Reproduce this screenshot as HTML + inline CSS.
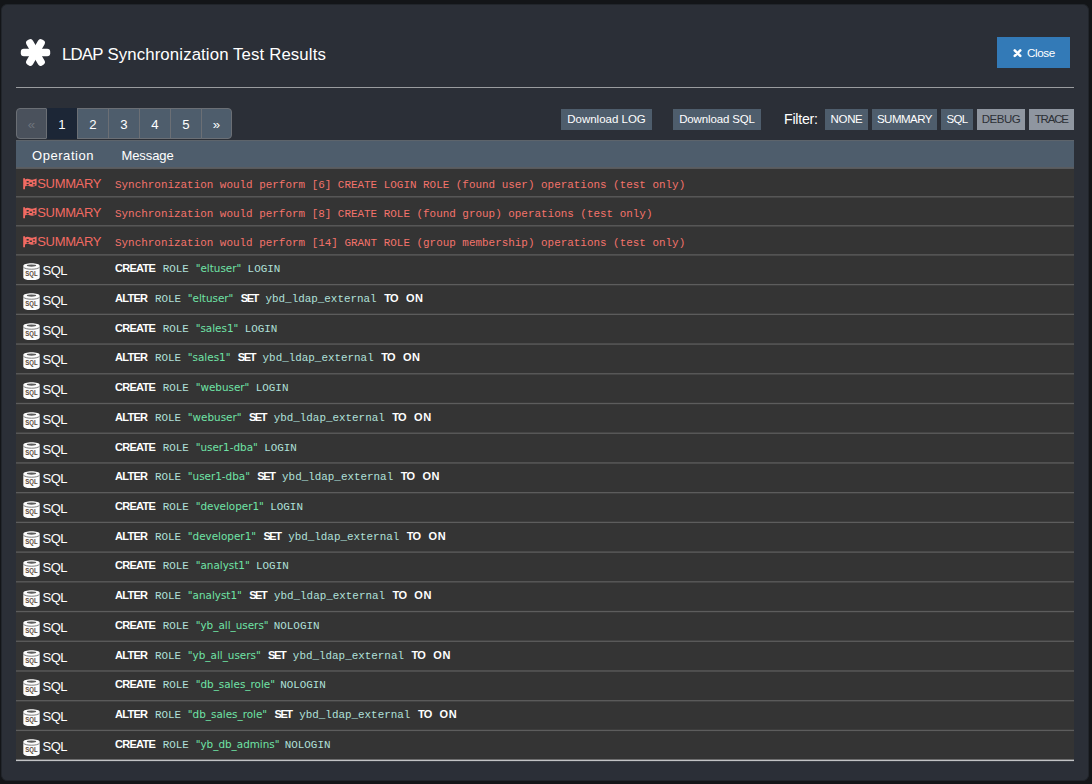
<!DOCTYPE html>
<html lang="en">
<head>
<meta charset="utf-8">
<title>LDAP Synchronization Test Results</title>
<style>
*{box-sizing:border-box}
html,body{margin:0;padding:0}
body{width:1092px;height:784px;overflow:hidden;background:#131518;font-family:"Liberation Sans",sans-serif;color:#fff;position:relative}
.modal{position:absolute;left:1px;top:4px;width:1088px;height:777px;background:#2b2f37;border:1px solid #21252b;border-radius:6px}
.icon{position:absolute;left:20px;top:38px;width:31px;height:29px}
h1{position:absolute;left:62px;top:44px;margin:0;font-weight:normal;font-size:16.8px;line-height:22px;color:#fff;white-space:nowrap}
.close{position:absolute;left:997px;top:37px;width:73px;height:31px;background:#337ab7;color:#fff;font-size:11.7px;letter-spacing:-0.4px;line-height:31px}
.close svg{position:absolute;left:15.600px;top:12.400px;width:9px;height:8.400px}
.close span{position:absolute;left:30px;top:0}
hr{position:absolute;left:16px;top:87px;width:1058px;height:1px;margin:0;border:0;background:#9a9c9f}
.pg{position:absolute;left:16px;top:108px;height:31px;display:flex}
.pg a{display:block;width:32px;height:31px;margin-left:-1px;border:1px solid #6b6f75;background:#4e5d6c;color:#fff;font-size:13.2px;line-height:31px;text-align:center}
.pg a:first-child{margin-left:0;border-radius:4px 0 0 4px;background:#4a515c;color:#6e747c;width:31px}
.pg a:last-child{border-radius:0 4px 4px 0;width:31px}
.pg a.act{background:#1c2636;border-color:#1c2636 #6b6f75}
.btn{position:absolute;top:109px;height:21px;background:#4e5d6c;color:#fff;font-size:11.5px;line-height:21px;text-align:center;white-space:nowrap}
.btn.off{background:#8f96a0;color:#2c3036}
.flt{position:absolute;left:784px;top:108.500px;font-size:14.2px;letter-spacing:-0.25px;line-height:21px;color:#fff}
.tbl{position:absolute;left:16px;top:140px;width:1058px;height:622px}
.grid{position:absolute;left:0;top:0}
.th{position:absolute;top:8px;font-size:13px;line-height:16px;color:#fff}
.r{position:absolute;left:0;width:1058px;height:29px;white-space:nowrap}
.r.s{color:#f26a62}
.r.s .m{color:#f3736b}
.r .lab{position:absolute;font-size:13px;line-height:16px;top:8px}
.r.s .lab{left:21.300px;letter-spacing:-0.35px}
.r.q .lab{left:26.600px;color:#fff;letter-spacing:-0.6px}
.fl{position:absolute;left:6.500px;top:9.700px;width:14px;height:12px;fill:currentColor}
.db{position:absolute;left:7px;top:7.600px;width:17px;height:17.600px}
.r .m{position:absolute;left:99px;top:8px;line-height:16px;font-family:"Liberation Mono",monospace;font-size:10.900px}
.r.s .m{font-size:10.930px;top:9px}
.r.q .m{top:4.600px;color:#b0e0da;word-spacing:1px}
.m b{font-family:"Liberation Sans",sans-serif;font-weight:bold;color:#fff;font-size:11px;letter-spacing:-0.7px}
.m b.k{letter-spacing:-1.4px}
.m b.o{letter-spacing:0.6px;margin-left:0.5px}
.m i{font-style:normal}
.m i.l{margin-left:-1px}
.m i.n{margin-left:-2.2px}
.m q{font-family:"DejaVu Sans","Liberation Sans",sans-serif;quotes:none;color:#6fe3a6;font-size:10.4px;margin-left:-0.8px;margin-right:-0.2px}
.m q.u{letter-spacing:0}
.m q.v{letter-spacing:0}
</style>
</head>
<body>
<div class="modal"></div>
<svg class="icon" viewBox="-15.500 -14.500 31 29"><g fill="#fff"><rect x="-14.700" y="-3.750" width="29.400" height="7.500" rx="3"/><rect x="-14.500" y="-3.750" width="29" height="7.500" rx="3" transform="rotate(60)"/><rect x="-14.500" y="-3.750" width="29" height="7.500" rx="3" transform="rotate(120)"/></g></svg>
<h1><span style="letter-spacing:-0.8px">LDAP</span><span style="letter-spacing:0.12px"> Synchronization Test Results</span></h1>
<div class="close"><svg viewBox="0 0 10 10"><path d="M1.700 1.700 8.300 8.300M8.300 1.700 1.700 8.300" stroke="#fff" stroke-width="3" stroke-linecap="round" fill="none"/></svg><span>Close</span></div>
<hr>
<div class="pg"><a>«</a><a class="act">1</a><a>2</a><a>3</a><a>4</a><a>5</a><a>»</a></div>
<div class="btn" style="left:561px;width:91px">Download LOG</div>
<div class="btn" style="left:673px;width:88px;letter-spacing:-0.15px">Download SQL</div>
<div class="flt">Filter:</div>
<div class="btn" style="left:825px;width:43px;letter-spacing:-0.35px">NONE</div>
<div class="btn" style="left:872px;width:65px;letter-spacing:-0.5px">SUMMARY</div>
<div class="btn" style="left:941px;width:32px;letter-spacing:-0.6px">SQL</div>
<div class="btn off" style="left:977px;width:48px;letter-spacing:-0.5px">DEBUG</div>
<div class="btn off" style="left:1029px;width:45px;letter-spacing:-1.2px;text-indent:-0.500px">TRACE</div>
<div class="tbl">
<svg class="grid" width="1058" height="622" viewBox="0 0 1058 622">
<rect x="0" y="0" width="1058" height="27.6" fill="#4e5d6c"/>
<rect x="0" y="27.6" width="1058" height="592.40" fill="#343434"/>
<rect x="0" y="27.35" width="1058" height="1.3" fill="#6c6e70"/>
<rect x="0" y="0" width="1058" height="1.1" fill="#5d646b"/>
<rect x="0" y="56.15" width="1058" height="1.3" fill="#5d5d5d"/>
<rect x="0" y="85.15" width="1058" height="1.3" fill="#5d5d5d"/>
<rect x="0" y="114.25" width="1058" height="1.3" fill="#5d5d5d"/>
<rect x="0" y="143.97" width="1058" height="1.3" fill="#5d5d5d"/>
<rect x="0" y="173.69" width="1058" height="1.3" fill="#5d5d5d"/>
<rect x="0" y="203.41" width="1058" height="1.3" fill="#5d5d5d"/>
<rect x="0" y="233.13" width="1058" height="1.3" fill="#5d5d5d"/>
<rect x="0" y="262.85" width="1058" height="1.3" fill="#5d5d5d"/>
<rect x="0" y="292.57" width="1058" height="1.3" fill="#5d5d5d"/>
<rect x="0" y="322.29" width="1058" height="1.3" fill="#5d5d5d"/>
<rect x="0" y="352.01" width="1058" height="1.3" fill="#5d5d5d"/>
<rect x="0" y="381.73" width="1058" height="1.3" fill="#5d5d5d"/>
<rect x="0" y="411.45" width="1058" height="1.3" fill="#5d5d5d"/>
<rect x="0" y="441.17" width="1058" height="1.3" fill="#5d5d5d"/>
<rect x="0" y="470.89" width="1058" height="1.3" fill="#5d5d5d"/>
<rect x="0" y="500.61" width="1058" height="1.3" fill="#5d5d5d"/>
<rect x="0" y="530.33" width="1058" height="1.3" fill="#5d5d5d"/>
<rect x="0" y="560.05" width="1058" height="1.3" fill="#5d5d5d"/>
<rect x="0" y="589.77" width="1058" height="1.3" fill="#5d5d5d"/>
<rect x="0" y="619.60" width="1058" height="1.5" fill="#c2c3c5"/>
</svg>
<div class="th" style="left:16px;letter-spacing:0.55px">Operation</div>
<div class="th" style="left:105.5px;letter-spacing:-0.1px">Message</div>
<div class="r s" style="top:28px"><svg class="fl" viewBox="0 0 14 12"><path fill-rule="evenodd" d="M0.200 0.200h1.800v11h-1.800z M2 1.500c1.800-1.100 3.600-0.600 5.600 0 2 0.600 3.900 0.200 6-0.900v6.900c-2.100 1.100-4 1.500-6 0.900-2-0.600-3.800-1.100-5.600 0z M3.600 2.900h2.100v1.500h-2.100z M9.900 3.200h2.200v1.400h-2.200z M6.700 4.600h2.200v1.400h-2.200z M3.600 5.900h2.100v1.300h-2.100z M9.900 6.200h2.200v1.300h-2.200z"/></svg><span class="lab">SUMMARY</span><span class="m">Synchronization would perform [6] CREATE LOGIN ROLE (found user) operations (test only)</span></div>
<div class="r s" style="top:57px"><svg class="fl" viewBox="0 0 14 12"><path fill-rule="evenodd" d="M0.200 0.200h1.800v11h-1.800z M2 1.500c1.800-1.100 3.600-0.600 5.600 0 2 0.600 3.900 0.200 6-0.900v6.900c-2.100 1.100-4 1.500-6 0.900-2-0.600-3.800-1.100-5.600 0z M3.600 2.900h2.100v1.500h-2.100z M9.900 3.200h2.200v1.400h-2.200z M6.700 4.600h2.200v1.400h-2.200z M3.600 5.900h2.100v1.300h-2.100z M9.900 6.200h2.200v1.300h-2.200z"/></svg><span class="lab">SUMMARY</span><span class="m">Synchronization would perform [8] CREATE ROLE (found group) operations (test only)</span></div>
<div class="r s" style="top:86px"><svg class="fl" viewBox="0 0 14 12"><path fill-rule="evenodd" d="M0.200 0.200h1.800v11h-1.800z M2 1.500c1.800-1.100 3.600-0.600 5.600 0 2 0.600 3.900 0.200 6-0.900v6.900c-2.100 1.100-4 1.500-6 0.900-2-0.600-3.800-1.100-5.600 0z M3.600 2.900h2.100v1.500h-2.100z M9.900 3.200h2.200v1.400h-2.200z M6.700 4.600h2.200v1.400h-2.200z M3.600 5.900h2.100v1.300h-2.100z M9.900 6.200h2.200v1.300h-2.200z"/></svg><span class="lab">SUMMARY</span><span class="m">Synchronization would perform [14] GRANT ROLE (group membership) operations (test only)</span></div>
<div class="r q" style="top:115px"><svg class="db" viewBox="0 0 17 17.600"><path d="M0.300 3C0.300 1.300 4 0.300 8.500 0.300s8.200 1 8.200 2.700v11.600c0 1.700-3.700 2.700-8.200 2.700S0.300 16.300 0.300 14.600z" fill="#fcfcfc"/><ellipse cx="8.500" cy="2.600" rx="4.700" ry="1.050" fill="#5c5c5c"/><path d="M0.400 4.100c1.200 1.600 4.600 2.100 8.100 2.100s6.900-0.500 8.100-2.100" fill="none" stroke="#5a5a5a" stroke-width="0.800"/><text x="8.400" y="13.300" text-anchor="middle" font-family="Liberation Sans, sans-serif" font-weight="bold" font-size="7.200" fill="#5a4a3a" textLength="12.400" lengthAdjust="spacingAndGlyphs">SQL</text></svg><span class="lab">SQL</span><span class="m"><b>CREATE</b> <i>ROLE</i> <q>"eltuser"</q> <i class="l">LOGIN</i></span></div>
<div class="r q" style="top:145px"><svg class="db" viewBox="0 0 17 17.600"><path d="M0.300 3C0.300 1.300 4 0.300 8.500 0.300s8.200 1 8.200 2.700v11.600c0 1.700-3.700 2.700-8.200 2.700S0.300 16.300 0.300 14.600z" fill="#fcfcfc"/><ellipse cx="8.500" cy="2.600" rx="4.700" ry="1.050" fill="#5c5c5c"/><path d="M0.400 4.100c1.200 1.600 4.600 2.100 8.100 2.100s6.900-0.500 8.100-2.100" fill="none" stroke="#5a5a5a" stroke-width="0.800"/><text x="8.400" y="13.300" text-anchor="middle" font-family="Liberation Sans, sans-serif" font-weight="bold" font-size="7.200" fill="#5a4a3a" textLength="12.400" lengthAdjust="spacingAndGlyphs">SQL</text></svg><span class="lab">SQL</span><span class="m"><b>ALTER</b> <i>ROLE</i> <q>"eltuser"</q> <b class="k">SET</b> <i>ybd_ldap_external</i> <b>TO</b> <b class="o">ON</b></span></div>
<div class="r q" style="top:175px"><svg class="db" viewBox="0 0 17 17.600"><path d="M0.300 3C0.300 1.300 4 0.300 8.500 0.300s8.200 1 8.200 2.700v11.600c0 1.700-3.700 2.700-8.200 2.700S0.300 16.300 0.300 14.600z" fill="#fcfcfc"/><ellipse cx="8.500" cy="2.600" rx="4.700" ry="1.050" fill="#5c5c5c"/><path d="M0.400 4.100c1.200 1.600 4.600 2.100 8.100 2.100s6.900-0.500 8.100-2.100" fill="none" stroke="#5a5a5a" stroke-width="0.800"/><text x="8.400" y="13.300" text-anchor="middle" font-family="Liberation Sans, sans-serif" font-weight="bold" font-size="7.200" fill="#5a4a3a" textLength="12.400" lengthAdjust="spacingAndGlyphs">SQL</text></svg><span class="lab">SQL</span><span class="m"><b>CREATE</b> <i>ROLE</i> <q>"sales1"</q> <i class="l">LOGIN</i></span></div>
<div class="r q" style="top:204px"><svg class="db" viewBox="0 0 17 17.600"><path d="M0.300 3C0.300 1.300 4 0.300 8.500 0.300s8.200 1 8.200 2.700v11.600c0 1.700-3.700 2.700-8.200 2.700S0.300 16.300 0.300 14.600z" fill="#fcfcfc"/><ellipse cx="8.500" cy="2.600" rx="4.700" ry="1.050" fill="#5c5c5c"/><path d="M0.400 4.100c1.200 1.600 4.600 2.100 8.100 2.100s6.900-0.500 8.100-2.100" fill="none" stroke="#5a5a5a" stroke-width="0.800"/><text x="8.400" y="13.300" text-anchor="middle" font-family="Liberation Sans, sans-serif" font-weight="bold" font-size="7.200" fill="#5a4a3a" textLength="12.400" lengthAdjust="spacingAndGlyphs">SQL</text></svg><span class="lab">SQL</span><span class="m"><b>ALTER</b> <i>ROLE</i> <q>"sales1"</q> <b class="k">SET</b> <i>ybd_ldap_external</i> <b>TO</b> <b class="o">ON</b></span></div>
<div class="r q" style="top:234px"><svg class="db" viewBox="0 0 17 17.600"><path d="M0.300 3C0.300 1.300 4 0.300 8.500 0.300s8.200 1 8.200 2.700v11.600c0 1.700-3.700 2.700-8.200 2.700S0.300 16.300 0.300 14.600z" fill="#fcfcfc"/><ellipse cx="8.500" cy="2.600" rx="4.700" ry="1.050" fill="#5c5c5c"/><path d="M0.400 4.100c1.200 1.600 4.600 2.100 8.100 2.100s6.900-0.500 8.100-2.100" fill="none" stroke="#5a5a5a" stroke-width="0.800"/><text x="8.400" y="13.300" text-anchor="middle" font-family="Liberation Sans, sans-serif" font-weight="bold" font-size="7.200" fill="#5a4a3a" textLength="12.400" lengthAdjust="spacingAndGlyphs">SQL</text></svg><span class="lab">SQL</span><span class="m"><b>CREATE</b> <i>ROLE</i> <q>"webuser"</q> <i class="l">LOGIN</i></span></div>
<div class="r q" style="top:264px"><svg class="db" viewBox="0 0 17 17.600"><path d="M0.300 3C0.300 1.300 4 0.300 8.500 0.300s8.200 1 8.200 2.700v11.600c0 1.700-3.700 2.700-8.200 2.700S0.300 16.300 0.300 14.600z" fill="#fcfcfc"/><ellipse cx="8.500" cy="2.600" rx="4.700" ry="1.050" fill="#5c5c5c"/><path d="M0.400 4.100c1.200 1.600 4.600 2.100 8.100 2.100s6.900-0.500 8.100-2.100" fill="none" stroke="#5a5a5a" stroke-width="0.800"/><text x="8.400" y="13.300" text-anchor="middle" font-family="Liberation Sans, sans-serif" font-weight="bold" font-size="7.200" fill="#5a4a3a" textLength="12.400" lengthAdjust="spacingAndGlyphs">SQL</text></svg><span class="lab">SQL</span><span class="m"><b>ALTER</b> <i>ROLE</i> <q>"webuser"</q> <b class="k">SET</b> <i>ybd_ldap_external</i> <b>TO</b> <b class="o">ON</b></span></div>
<div class="r q" style="top:294px"><svg class="db" viewBox="0 0 17 17.600"><path d="M0.300 3C0.300 1.300 4 0.300 8.500 0.300s8.200 1 8.200 2.700v11.600c0 1.700-3.700 2.700-8.200 2.700S0.300 16.300 0.300 14.600z" fill="#fcfcfc"/><ellipse cx="8.500" cy="2.600" rx="4.700" ry="1.050" fill="#5c5c5c"/><path d="M0.400 4.100c1.200 1.600 4.600 2.100 8.100 2.100s6.900-0.500 8.100-2.100" fill="none" stroke="#5a5a5a" stroke-width="0.800"/><text x="8.400" y="13.300" text-anchor="middle" font-family="Liberation Sans, sans-serif" font-weight="bold" font-size="7.200" fill="#5a4a3a" textLength="12.400" lengthAdjust="spacingAndGlyphs">SQL</text></svg><span class="lab">SQL</span><span class="m"><b>CREATE</b> <i>ROLE</i> <q>"user1-dba"</q> <i class="l">LOGIN</i></span></div>
<div class="r q" style="top:323px"><svg class="db" viewBox="0 0 17 17.600"><path d="M0.300 3C0.300 1.300 4 0.300 8.500 0.300s8.200 1 8.200 2.700v11.600c0 1.700-3.700 2.700-8.200 2.700S0.300 16.300 0.300 14.600z" fill="#fcfcfc"/><ellipse cx="8.500" cy="2.600" rx="4.700" ry="1.050" fill="#5c5c5c"/><path d="M0.400 4.100c1.200 1.600 4.600 2.100 8.100 2.100s6.900-0.500 8.100-2.100" fill="none" stroke="#5a5a5a" stroke-width="0.800"/><text x="8.400" y="13.300" text-anchor="middle" font-family="Liberation Sans, sans-serif" font-weight="bold" font-size="7.200" fill="#5a4a3a" textLength="12.400" lengthAdjust="spacingAndGlyphs">SQL</text></svg><span class="lab">SQL</span><span class="m"><b>ALTER</b> <i>ROLE</i> <q>"user1-dba"</q> <b class="k">SET</b> <i>ybd_ldap_external</i> <b>TO</b> <b class="o">ON</b></span></div>
<div class="r q" style="top:353px"><svg class="db" viewBox="0 0 17 17.600"><path d="M0.300 3C0.300 1.300 4 0.300 8.500 0.300s8.200 1 8.200 2.700v11.600c0 1.700-3.700 2.700-8.200 2.700S0.300 16.300 0.300 14.600z" fill="#fcfcfc"/><ellipse cx="8.500" cy="2.600" rx="4.700" ry="1.050" fill="#5c5c5c"/><path d="M0.400 4.100c1.200 1.600 4.600 2.100 8.100 2.100s6.900-0.500 8.100-2.100" fill="none" stroke="#5a5a5a" stroke-width="0.800"/><text x="8.400" y="13.300" text-anchor="middle" font-family="Liberation Sans, sans-serif" font-weight="bold" font-size="7.200" fill="#5a4a3a" textLength="12.400" lengthAdjust="spacingAndGlyphs">SQL</text></svg><span class="lab">SQL</span><span class="m"><b>CREATE</b> <i>ROLE</i> <q>"developer1"</q> <i class="l">LOGIN</i></span></div>
<div class="r q" style="top:383px"><svg class="db" viewBox="0 0 17 17.600"><path d="M0.300 3C0.300 1.300 4 0.300 8.500 0.300s8.200 1 8.200 2.700v11.600c0 1.700-3.700 2.700-8.200 2.700S0.300 16.300 0.300 14.600z" fill="#fcfcfc"/><ellipse cx="8.500" cy="2.600" rx="4.700" ry="1.050" fill="#5c5c5c"/><path d="M0.400 4.100c1.200 1.600 4.600 2.100 8.100 2.100s6.900-0.500 8.100-2.100" fill="none" stroke="#5a5a5a" stroke-width="0.800"/><text x="8.400" y="13.300" text-anchor="middle" font-family="Liberation Sans, sans-serif" font-weight="bold" font-size="7.200" fill="#5a4a3a" textLength="12.400" lengthAdjust="spacingAndGlyphs">SQL</text></svg><span class="lab">SQL</span><span class="m"><b>ALTER</b> <i>ROLE</i> <q>"developer1"</q> <b class="k">SET</b> <i>ybd_ldap_external</i> <b>TO</b> <b class="o">ON</b></span></div>
<div class="r q" style="top:412px"><svg class="db" viewBox="0 0 17 17.600"><path d="M0.300 3C0.300 1.300 4 0.300 8.500 0.300s8.200 1 8.200 2.700v11.600c0 1.700-3.700 2.700-8.200 2.700S0.300 16.300 0.300 14.600z" fill="#fcfcfc"/><ellipse cx="8.500" cy="2.600" rx="4.700" ry="1.050" fill="#5c5c5c"/><path d="M0.400 4.100c1.200 1.600 4.600 2.100 8.100 2.100s6.900-0.500 8.100-2.100" fill="none" stroke="#5a5a5a" stroke-width="0.800"/><text x="8.400" y="13.300" text-anchor="middle" font-family="Liberation Sans, sans-serif" font-weight="bold" font-size="7.200" fill="#5a4a3a" textLength="12.400" lengthAdjust="spacingAndGlyphs">SQL</text></svg><span class="lab">SQL</span><span class="m"><b>CREATE</b> <i>ROLE</i> <q>"analyst1"</q> <i class="l">LOGIN</i></span></div>
<div class="r q" style="top:442px"><svg class="db" viewBox="0 0 17 17.600"><path d="M0.300 3C0.300 1.300 4 0.300 8.500 0.300s8.200 1 8.200 2.700v11.600c0 1.700-3.700 2.700-8.200 2.700S0.300 16.300 0.300 14.600z" fill="#fcfcfc"/><ellipse cx="8.500" cy="2.600" rx="4.700" ry="1.050" fill="#5c5c5c"/><path d="M0.400 4.100c1.200 1.600 4.600 2.100 8.100 2.100s6.900-0.500 8.100-2.100" fill="none" stroke="#5a5a5a" stroke-width="0.800"/><text x="8.400" y="13.300" text-anchor="middle" font-family="Liberation Sans, sans-serif" font-weight="bold" font-size="7.200" fill="#5a4a3a" textLength="12.400" lengthAdjust="spacingAndGlyphs">SQL</text></svg><span class="lab">SQL</span><span class="m"><b>ALTER</b> <i>ROLE</i> <q>"analyst1"</q> <b class="k">SET</b> <i>ybd_ldap_external</i> <b>TO</b> <b class="o">ON</b></span></div>
<div class="r q" style="top:472px"><svg class="db" viewBox="0 0 17 17.600"><path d="M0.300 3C0.300 1.300 4 0.300 8.500 0.300s8.200 1 8.200 2.700v11.600c0 1.700-3.700 2.700-8.200 2.700S0.300 16.300 0.300 14.600z" fill="#fcfcfc"/><ellipse cx="8.500" cy="2.600" rx="4.700" ry="1.050" fill="#5c5c5c"/><path d="M0.400 4.100c1.200 1.600 4.600 2.100 8.100 2.100s6.900-0.500 8.100-2.100" fill="none" stroke="#5a5a5a" stroke-width="0.800"/><text x="8.400" y="13.300" text-anchor="middle" font-family="Liberation Sans, sans-serif" font-weight="bold" font-size="7.200" fill="#5a4a3a" textLength="12.400" lengthAdjust="spacingAndGlyphs">SQL</text></svg><span class="lab">SQL</span><span class="m"><b>CREATE</b> <i>ROLE</i> <q class="u">"yb_all_users"</q> <i class="n">NOLOGIN</i></span></div>
<div class="r q" style="top:502px"><svg class="db" viewBox="0 0 17 17.600"><path d="M0.300 3C0.300 1.300 4 0.300 8.500 0.300s8.200 1 8.200 2.700v11.600c0 1.700-3.700 2.700-8.200 2.700S0.300 16.300 0.300 14.600z" fill="#fcfcfc"/><ellipse cx="8.500" cy="2.600" rx="4.700" ry="1.050" fill="#5c5c5c"/><path d="M0.400 4.100c1.200 1.600 4.600 2.100 8.100 2.100s6.900-0.500 8.100-2.100" fill="none" stroke="#5a5a5a" stroke-width="0.800"/><text x="8.400" y="13.300" text-anchor="middle" font-family="Liberation Sans, sans-serif" font-weight="bold" font-size="7.200" fill="#5a4a3a" textLength="12.400" lengthAdjust="spacingAndGlyphs">SQL</text></svg><span class="lab">SQL</span><span class="m"><b>ALTER</b> <i>ROLE</i> <q class="u">"yb_all_users"</q> <b class="k">SET</b> <i>ybd_ldap_external</i> <b>TO</b> <b class="o">ON</b></span></div>
<div class="r q" style="top:531px"><svg class="db" viewBox="0 0 17 17.600"><path d="M0.300 3C0.300 1.300 4 0.300 8.500 0.300s8.200 1 8.200 2.700v11.600c0 1.700-3.700 2.700-8.200 2.700S0.300 16.300 0.300 14.600z" fill="#fcfcfc"/><ellipse cx="8.500" cy="2.600" rx="4.700" ry="1.050" fill="#5c5c5c"/><path d="M0.400 4.100c1.200 1.600 4.600 2.100 8.100 2.100s6.900-0.500 8.100-2.100" fill="none" stroke="#5a5a5a" stroke-width="0.800"/><text x="8.400" y="13.300" text-anchor="middle" font-family="Liberation Sans, sans-serif" font-weight="bold" font-size="7.200" fill="#5a4a3a" textLength="12.400" lengthAdjust="spacingAndGlyphs">SQL</text></svg><span class="lab">SQL</span><span class="m"><b>CREATE</b> <i>ROLE</i> <q class="u">"db_sales_role"</q> <i class="n">NOLOGIN</i></span></div>
<div class="r q" style="top:561px"><svg class="db" viewBox="0 0 17 17.600"><path d="M0.300 3C0.300 1.300 4 0.300 8.500 0.300s8.200 1 8.200 2.700v11.600c0 1.700-3.700 2.700-8.200 2.700S0.300 16.300 0.300 14.600z" fill="#fcfcfc"/><ellipse cx="8.500" cy="2.600" rx="4.700" ry="1.050" fill="#5c5c5c"/><path d="M0.400 4.100c1.200 1.600 4.600 2.100 8.100 2.100s6.900-0.500 8.100-2.100" fill="none" stroke="#5a5a5a" stroke-width="0.800"/><text x="8.400" y="13.300" text-anchor="middle" font-family="Liberation Sans, sans-serif" font-weight="bold" font-size="7.200" fill="#5a4a3a" textLength="12.400" lengthAdjust="spacingAndGlyphs">SQL</text></svg><span class="lab">SQL</span><span class="m"><b>ALTER</b> <i>ROLE</i> <q class="u">"db_sales_role"</q> <b class="k">SET</b> <i>ybd_ldap_external</i> <b>TO</b> <b class="o">ON</b></span></div>
<div class="r q" style="top:591px"><svg class="db" viewBox="0 0 17 17.600"><path d="M0.300 3C0.300 1.300 4 0.300 8.500 0.300s8.200 1 8.200 2.700v11.600c0 1.700-3.700 2.700-8.200 2.700S0.300 16.300 0.300 14.600z" fill="#fcfcfc"/><ellipse cx="8.500" cy="2.600" rx="4.700" ry="1.050" fill="#5c5c5c"/><path d="M0.400 4.100c1.200 1.600 4.600 2.100 8.100 2.100s6.900-0.500 8.100-2.100" fill="none" stroke="#5a5a5a" stroke-width="0.800"/><text x="8.400" y="13.300" text-anchor="middle" font-family="Liberation Sans, sans-serif" font-weight="bold" font-size="7.200" fill="#5a4a3a" textLength="12.400" lengthAdjust="spacingAndGlyphs">SQL</text></svg><span class="lab">SQL</span><span class="m"><b>CREATE</b> <i>ROLE</i> <q class="v">"yb_db_admins"</q> <i class="n">NOLOGIN</i></span></div>
</div>
</body>
</html>
